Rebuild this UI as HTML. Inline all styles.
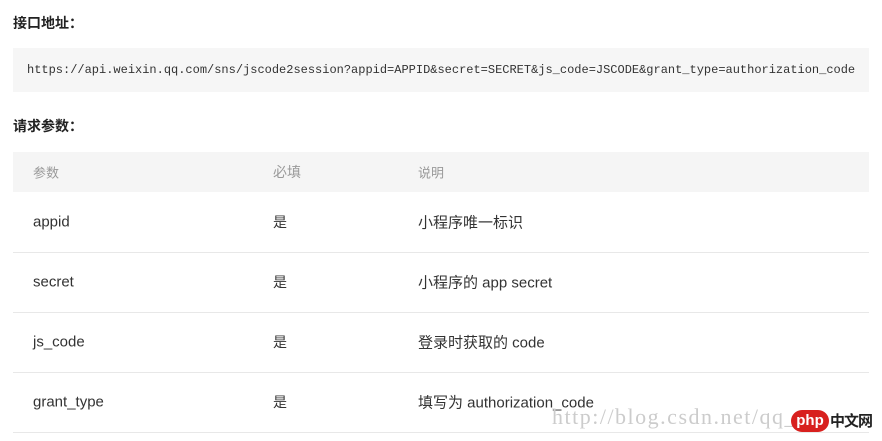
<!DOCTYPE html>
<html><head><meta charset="utf-8"><style>
body{margin:0;background:#fff;width:882px;height:441px;overflow:hidden;font-family:"Liberation Sans","Noto Sans CJK SC",sans-serif;color:#333;position:relative}
.h{position:absolute;left:13px;font-size:14px;font-weight:bold;color:#222}
.code{position:absolute;left:13px;top:48px;width:856px;height:44px;background:#f6f6f6;font-family:"Liberation Mono",monospace;font-size:12px;line-height:44px;color:#333;text-indent:14px;white-space:nowrap}
.th{position:absolute;left:13px;top:152px;width:856px;height:40px;background:#f5f5f5;font-size:13px;color:#999}
.row{position:absolute;left:13px;width:856px;height:60px;border-bottom:1px solid #e8e8e8;font-size:15px;color:#333}
span{position:absolute;top:50%;transform:translateY(-50%);white-space:nowrap}
.c1{left:20px}.c2{left:260px;font-size:14px}.c3{left:405px}
.wm{position:absolute;left:552px;top:404px;font-family:"Liberation Serif",serif;font-size:22px;color:#ccc;letter-spacing:1.5px}
.php{position:absolute;left:791px;top:410px;width:38px;height:22px;border-radius:11px;background:#d8201e;color:#fff;font-size:15px;font-weight:bold;text-align:center;line-height:21px}
.zw{position:absolute;left:830px;top:410px;font-size:15px;font-weight:bold;color:#222;letter-spacing:-1px}
</style></head><body>
<div class="h" style="top:13px">接口地址：</div>
<div class="code">https://api.weixin.qq.com/sns/jscode2session?appid=APPID&amp;secret=SECRET&amp;js_code=JSCODE&amp;grant_type=authorization_code</div>
<div class="h" style="top:116px">请求参数：</div>
<div class="th"><span class="c1">参数</span><span class="c2">必填</span><span class="c3">说明</span></div>
<div class="row" style="top:192px"><span class="c1">appid</span><span class="c2">是</span><span class="c3">小程序唯一标识</span></div>
<div class="row" style="top:252px"><span class="c1">secret</span><span class="c2">是</span><span class="c3">小程序的 app secret</span></div>
<div class="row" style="top:312px"><span class="c1">js_code</span><span class="c2">是</span><span class="c3">登录时获取的 code</span></div>
<div class="row" style="top:372px"><span class="c1">grant_type</span><span class="c2">是</span><span class="c3">填写为 authorization_code</span></div>
<div class="wm">http://blog.csdn.net/qq_</div>
<div class="php">php</div>
<div class="zw">中文网</div>
</body></html>
